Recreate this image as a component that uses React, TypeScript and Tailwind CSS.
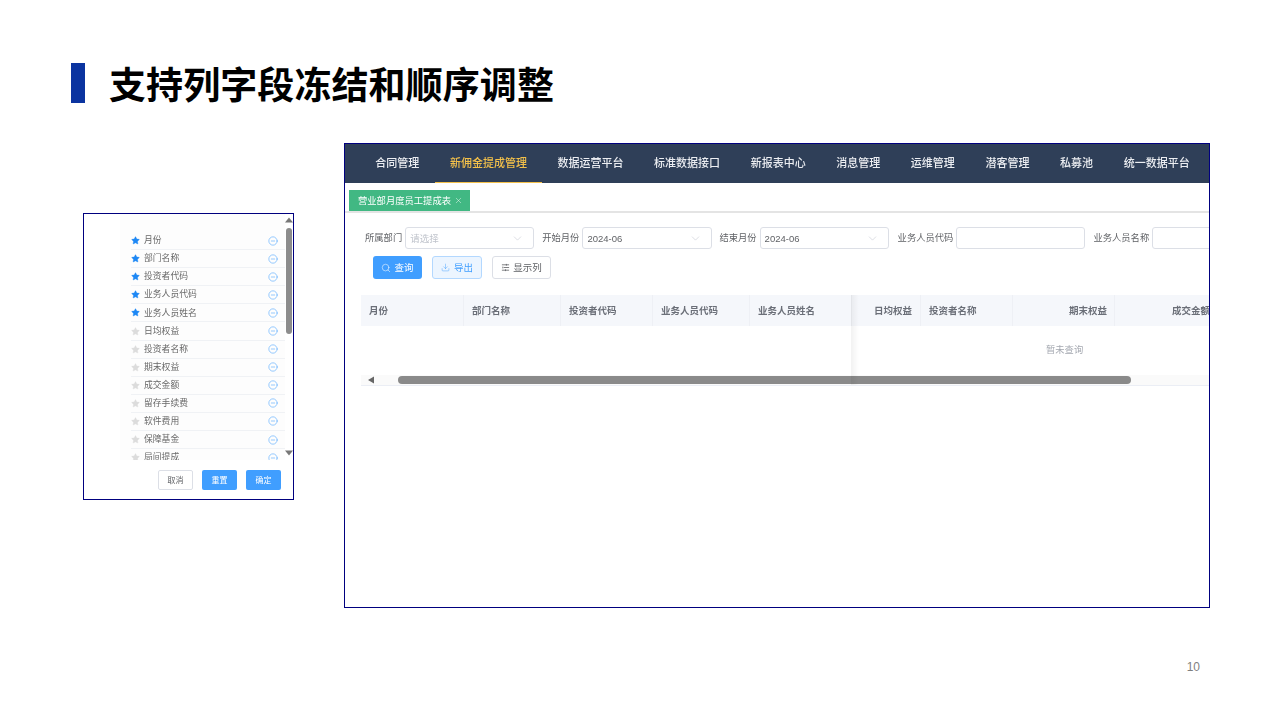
import React from "react";
import { ChevronDown, CircleMinus, Download, Search, Star, X } from "lucide-react";

const FONT = "font-['Noto_Sans_CJK_SC','Noto_Sans',sans-serif]";

const fields: [string, boolean][] = [
  ["月份", true],
  ["部门名称", true],
  ["投资者代码", true],
  ["业务人员代码", true],
  ["业务人员姓名", true],
  ["日均权益", false],
  ["投资者名称", false],
  ["期末权益", false],
  ["成交金额", false],
  ["留存手续费", false],
  ["软件费用", false],
  ["保障基金", false],
  ["局间提成", false],
];

const nav = ["合同管理", "新佣金提成管理", "数据运营平台", "标准数据接口", "新报表中心", "消息管理", "运维管理", "潜客管理", "私募池", "统一数据平台"];

function Tri({ up, className }: { up?: boolean; className?: string }) {
  return (
    <svg width="8" height="6" viewBox="0 0 8 6" className={className}>
      <path d={up ? "M4 0.5 L8 5.5 L0 5.5 Z" : "M4 5.5 L8 0.5 L0 0.5 Z"} fill="#777" />
    </svg>
  );
}

function ColumnPanel() {
  return (
    <div className="w-[211px] h-[287px] border border-[#00007f] bg-white flex flex-col shrink-0">
      <div className="h-[246px] flex overflow-hidden blur-[0.45px]">
        <div className="w-[36px] shrink-0 bg-white" />
        <div className="w-[165px] shrink-0 bg-[#fdfdfd] pt-[18px] pl-[11px]">
          {fields.map(([name, on]) => (
            <div key={name} className="h-[18.1px] border-b border-[#f0f2f5] flex items-center shrink-0">
              <Star size={9} className={on ? "text-[#1e88f5]" : "text-[#dcdcdc]"} fill="currentColor" strokeWidth={1} />
              <span className="ml-[4px] text-[8.8px] leading-none text-[#686868]">{name}</span>
              <CircleMinus size={10} className="ml-auto mr-[7px] text-[#4ea5ff]" strokeWidth={1.4} />
            </div>
          ))}
        </div>
        <div className="w-[8px] shrink-0 flex flex-col items-center pt-[3px]">
          <Tri up />
          <div className="w-[6px] h-[106px] mt-[5px] rounded-full bg-[#8c8c8c]" />
          <Tri className="mt-[116px]" />
        </div>
      </div>
      <div className="flex justify-end gap-[9px] pr-[12px] pt-[10px] blur-[0.45px]">
        <button className="w-[35px] h-[20px] border border-[#dcdfe6] rounded-[2px] bg-white text-[8px] text-[#606266]">取消</button>
        <button className="w-[35px] h-[20px] rounded-[2px] bg-[#409eff] text-[8px] text-white">重置</button>
        <button className="w-[35px] h-[20px] rounded-[2px] bg-[#409eff] text-[8px] text-white">确定</button>
      </div>
    </div>
  );
}

function Field({ label, w, value, placeholder, chevron, ml }: { label: string; w: string; value?: string; placeholder?: string; chevron?: boolean; ml: string }) {
  return (
    <div className={`flex items-center shrink-0 ${ml}`}>
      <span className="text-[9.3px] text-[#606266] whitespace-nowrap mr-[3px]">{label}</span>
      <div className={`${w} h-[22px] border border-[#dcdfe6] rounded-[3px] bg-white flex items-center px-[4px] text-[9.5px]`}>
        {value && <span className="text-[#606266] pt-[2px] font-['Liberation_Sans',sans-serif]">{value}</span>}
        {placeholder && <span className="text-[#c0c4cc] pt-[1px]">{placeholder}</span>}
        {chevron && <ChevronDown size={13} className="ml-auto mr-[5px] text-[#c0c4cc]" strokeWidth={1} />}
      </div>
    </div>
  );
}

const leftCols: [string, string][] = [
  ["月份", "w-[103px]"],
  ["部门名称", "w-[97px]"],
  ["投资者代码", "w-[92px]"],
  ["业务人员代码", "w-[97px]"],
  ["业务人员姓名", "w-[102px]"],
];

function MainPanel() {
  return (
    <div className="w-[866px] h-[465px] border border-[#00007f] bg-white overflow-hidden shrink-0">
      <div className="blur-[0.45px]">
        <div className="h-[39px] bg-[#2f3f58] flex pl-[15px] whitespace-nowrap">
          {nav.map((n, i) => (
            <div key={n} className={`h-full px-[15.3px] pb-[1px] flex items-center text-[11px] font-medium border-b ${i === 1 ? "text-[#f3c04a] border-[#f3c04a]" : "text-[#eceef2] border-transparent"}`}>
              {n}
            </div>
          ))}
        </div>
        <div className="h-[30px] border-b-2 border-[#e4e4e4] pt-[7px] pl-[4px]">
          <div className="w-[121px] h-[21px] bg-[#41b883] flex items-center pl-[9px] text-[9.3px] text-white whitespace-nowrap">
            营业部月度员工提成表
            <X size={9} className="ml-[3px]" strokeWidth={1.2} />
          </div>
        </div>
        <div className="flex items-center pl-[20px] pt-[14px] whitespace-nowrap">
          <Field label="所属部门" w="w-[129px]" placeholder="请选择" chevron ml="ml-0" />
          <Field label="开始月份" w="w-[130px]" value="2024-06" chevron ml="ml-[8px]" />
          <Field label="结束月份" w="w-[129px]" value="2024-06" chevron ml="ml-[7px]" />
          <Field label="业务人员代码" w="w-[129px]" ml="ml-[9px]" />
          <Field label="业务人员名称" w="w-[129px]" ml="ml-[8px]" />
        </div>
        <div className="flex pl-[28px] pt-[7px] gap-[10px]">
          <button className="w-[49px] h-[23px] rounded-[3px] bg-[#409eff] text-white text-[9.5px] flex items-center justify-center gap-[3px]">
            <Search size={10} strokeWidth={1.3} />查询
          </button>
          <button className="w-[50px] h-[23px] rounded-[3px] bg-[#ecf5ff] border border-[#b3d8ff] text-[#409eff] text-[9.5px] flex items-center justify-center gap-[4px]">
            <Download size={9} strokeWidth={1.2} />导出
          </button>
          <button className="w-[59px] h-[23px] rounded-[3px] bg-white border border-[#dcdfe6] text-[#606266] text-[9.5px] flex items-center justify-center gap-[3px]">
            <svg width="9" height="9" viewBox="0 0 10 10" fill="none" stroke="#606266" strokeWidth="0.9">
              <path d="M1 2h8M3 5h6M1 8h8" />
              <path d="M6 1v2M2 4v2M5 7v2" />
            </svg>
            显示列
          </button>
        </div>
        <div className="relative ml-[16px] mt-[16px] border-b border-[#ebeef5] text-[9.5px] font-bold text-[#6b6f78] whitespace-nowrap">
          <div className="h-[31px] bg-[#f5f7fb] flex items-stretch">
            <div className="flex shrink-0 w-[491px]">
              {leftCols.map(([t, w]) => (
                <div key={t} className={`${w} border-r border-[#eef0f5] pl-[8px] flex items-center shrink-0`}>{t}</div>
              ))}
            </div>
            <div className="w-[69px] pr-[8px] border-r border-[#eef0f5] flex items-center justify-end shrink-0">日均权益</div>
            <div className="w-[92px] pl-[8px] border-r border-[#eef0f5] flex items-center shrink-0">投资者名称</div>
            <div className="w-[102px] pr-[7px] border-r border-[#eef0f5] flex items-center justify-end shrink-0">期末权益</div>
            <div className="w-[102px] pr-[7px] flex items-center justify-end shrink-0">成交金额</div>
          </div>
          <div className="h-[49px] flex font-normal">
            <div className="w-[491px] shrink-0" />
            <div className="flex-1 pl-[194px] pt-[17px] text-[9.3px] text-[#a4a8b0]">暂未查询</div>
          </div>
          <div className="h-[10px] bg-[#fafafa] flex items-center">
            <svg width="8" height="8" viewBox="0 0 8 8" className="ml-[6px] shrink-0">
              <path d="M1 4 L7 0.5 L7 7.5 Z" fill="#666" />
            </svg>
            <div className="ml-[23px] w-[733px] h-[8px] rounded-full bg-[#8a8a8a]" />
          </div>
          <div className="absolute left-[490px] top-0 bottom-0 w-[8px] bg-gradient-to-r from-[#0000000d] to-transparent" />
        </div>
      </div>
    </div>
  );
}

export default function App() {
  return (
    <div className={`w-[1280px] h-[720px] bg-white overflow-hidden ${FONT}`}>
      <div className="flex items-center pl-[71px] pt-[63px]">
        <div className="w-[14px] h-[40px] bg-[#0b34a0]" />
        <h1 className="ml-[24px] text-[37px] tracking-[0.08px] leading-[40px] font-bold text-black whitespace-nowrap">支持列字段冻结和顺序调整</h1>
      </div>
      <div className="flex items-start pl-[83px] mt-[40px]">
        <div className="mt-[70px]"><ColumnPanel /></div>
        <div className="ml-[50px]"><MainPanel /></div>
      </div>
      <div className="flex justify-end pr-[80px] mt-[52px] text-[12px] leading-[14px] text-[#7f7f7f] font-['Liberation_Sans',sans-serif]">10</div>
    </div>
  );
}
